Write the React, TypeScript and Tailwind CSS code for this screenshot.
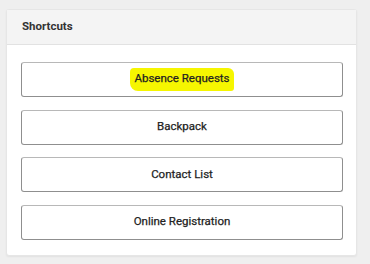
const shortcuts = ["Absence Requests", "Backpack", "Contact List", "Online Registration"];

export default function App() {
  return (
    <div className="h-[264px] w-[370px] bg-[#efefef] pl-[6px] pt-[9px] font-['Roboto',sans-serif]">
      <div className="w-[351px] rounded-[3px] border border-[#e6e6e6] bg-white shadow-[0_1px_2px_rgba(0,0,0,0.06)]">
        <div className="flex h-[35px] items-center border-b border-[#e2e2e2] bg-[#f4f4f4] px-[15px]">
          <h2 className="text-[11.5px] font-bold text-[#333]">Shortcuts</h2>
        </div>
        <div className="flex flex-col gap-[12.5px] px-[14px] pt-[17px] pb-[15px]">
          {shortcuts.map((label, i) => (
            <button
              key={label}
              className="flex h-[35px] w-[322px] items-center justify-center rounded-[3px] border border-[#8f8f8f] border-t-[#b8b8b8] bg-white text-[11.5px] font-normal text-[#222] [-webkit-text-stroke:0.25px_#222]"
            >
              {i === 0 ? (
                <span className="rounded-[4px_6px_3px_8px] bg-[#f6f600] px-[4px] pt-[2px] pb-[3px]">
                  {label}
                </span>
              ) : (
                label
              )}
            </button>
          ))}
        </div>
      </div>
    </div>
  );
}
